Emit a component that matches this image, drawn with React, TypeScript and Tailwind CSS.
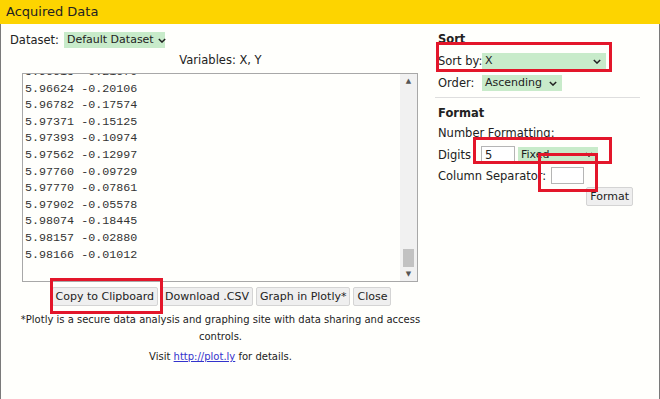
const rows = [
  ["5.96615", "-0.21670"],
  ["5.96624", "-0.20106"],
  ["5.96782", "-0.17574"],
  ["5.97371", "-0.15125"],
  ["5.97393", "-0.10974"],
  ["5.97562", "-0.12997"],
  ["5.97760", "-0.09729"],
  ["5.97770", "-0.07861"],
  ["5.97902", "-0.05578"],
  ["5.98074", "-0.18445"],
  ["5.98157", "-0.02880"],
  ["5.98166", "-0.01012"],
];

function Chevron() {
  return (
    <svg viewBox="0 0 10 6" className="w-[8px] h-[5px] shrink-0" aria-hidden="true">
      <path d="M1 1l4 4 4-4" stroke="#222" strokeWidth="1.8" fill="none" />
    </svg>
  );
}

function Select({ label, className }: { label: string; className: string }) {
  return (
    <div
      className={`h-[16px] bg-[#c8ebca] flex items-center justify-between whitespace-nowrap text-[11px] pl-[3px] pr-[5px] ${className}`}
    >
      <span>{label}</span>
      <Chevron />
    </div>
  );
}

function Btn({ children }: { children: string }) {
  return (
    <div className="h-[19px] px-[3px] flex items-center whitespace-nowrap text-[11px] bg-[#efefef] border border-[#d4d4d4] rounded-[2px]">
      {children}
    </div>
  );
}

function Mark({ className }: { className: string }) {
  return <div className={`absolute border-[3px] border-[#e3162a] ${className}`} />;
}

export default function App() {
  return (
    <div className="relative w-[660px] h-[399px] overflow-hidden bg-[#fffffc] text-[#222] text-[11.5px] leading-[16px] font-['DejaVu_Sans','Liberation_Sans',sans-serif]">
      <div className="h-[24px] bg-[#fdd400] pl-[6px] flex items-center text-[13px]">Acquired Data</div>

      <div className="flex h-[375px] border-x border-[#7a7a7a]">
        {/* data column */}
        <div className="w-[429px] flex flex-col">
          <div className="mt-[8px] ml-[9px] flex items-center gap-[5px]">
            <span>Dataset:</span>
            <Select label="Default Dataset" className="w-[101px] gap-[4px]" />
          </div>
          <div className="mt-[4px] text-center pl-[10px]">Variables: X, Y</div>

          <div className="mt-[5px] ml-[21px] w-[396px] h-[209px] border border-[#a8a8a8] flex overflow-hidden">
            <div className="flex-1 overflow-hidden">
              <div className="-mt-[10px] pl-[2px] font-['Liberation_Mono',monospace] text-[11.7px] leading-[16.6px] text-[#333]">
                {rows.map(([x, y]) => (
                  <div key={x} className="whitespace-pre">
                    {x} {y}
                  </div>
                ))}
              </div>
            </div>
            <div className="w-[17px] bg-[#f1f1f1] flex flex-col items-center">
              <div className="h-[14px] flex items-center text-[7px] text-[#555]">▲</div>
              <div className="flex-1" />
              <div className="w-[11px] h-[18px] bg-[#c2c2c2]" />
              <div className="h-[14px] flex items-center text-[7px] text-[#555]">▼</div>
            </div>
          </div>

          <div className="mt-[5px] flex justify-center gap-[3px] pl-[12px]">
            <Btn>Copy to Clipboard</Btn>
            <Btn>Download .CSV</Btn>
            <Btn>Graph in Plotly*</Btn>
            <Btn>Close</Btn>
          </div>

          <p className="mt-[5px] pl-[10px] text-center text-[10px] leading-[17px]">
            *Plotly is a secure data analysis and graphing site with data sharing and access controls.
          </p>
          <p className="mt-[4px] pl-[10px] text-center text-[10px]">
            Visit <span className="text-[#3333cc] underline">http://plot.ly</span> for details.
          </p>
        </div>

        {/* options column */}
        <div className="w-[202px] ml-[8px] flex flex-col">
          <div className="mt-[7px] font-bold">Sort</div>
          <div className="mt-[6px] flex items-center">
            <span className="w-[44px] whitespace-nowrap">Sort by:</span>
            <Select label="X" className="w-[124px]" />
          </div>
          <div className="mt-[6px] flex items-center">
            <span className="w-[44px]">Order:</span>
            <Select label="Ascending" className="w-[80px]" />
          </div>
          <div className="mt-[6px] -ml-[3px] h-px bg-[#dedede]" />
          <div className="mt-[7px] font-bold">Format</div>
          <div className="mt-[4px]">Number Formatting:</div>
          <div className="mt-[5px] flex items-center">
            <span className="w-[43px]">Digits</span>
            <div className="w-[34px] h-[17px] border border-[#b5b5b5] bg-white pl-[3px] flex items-center">5</div>
            <Select label="Fixed" className="w-[80px] ml-[3px]" />
          </div>
          <div className="mt-[4px] flex items-center">
            <span className="w-[113px] whitespace-nowrap">Column Separator:</span>
            <div className="w-[33px] h-[17px] border border-[#b5b5b5] bg-white" />
          </div>
          <div className="mt-[3px] self-end mr-[7px]">
            <Btn>Format</Btn>
          </div>
        </div>
      </div>

      <Mark className="left-[436px] top-[42px] w-[176px] h-[30px]" />
      <Mark className="left-[473px] top-[137px] w-[139px] h-[27px]" />
      <Mark className="left-[538px] top-[153px] w-[60px] h-[39px]" />
      <Mark className="left-[50px] top-[278px] w-[113px] h-[36px]" />
    </div>
  );
}
